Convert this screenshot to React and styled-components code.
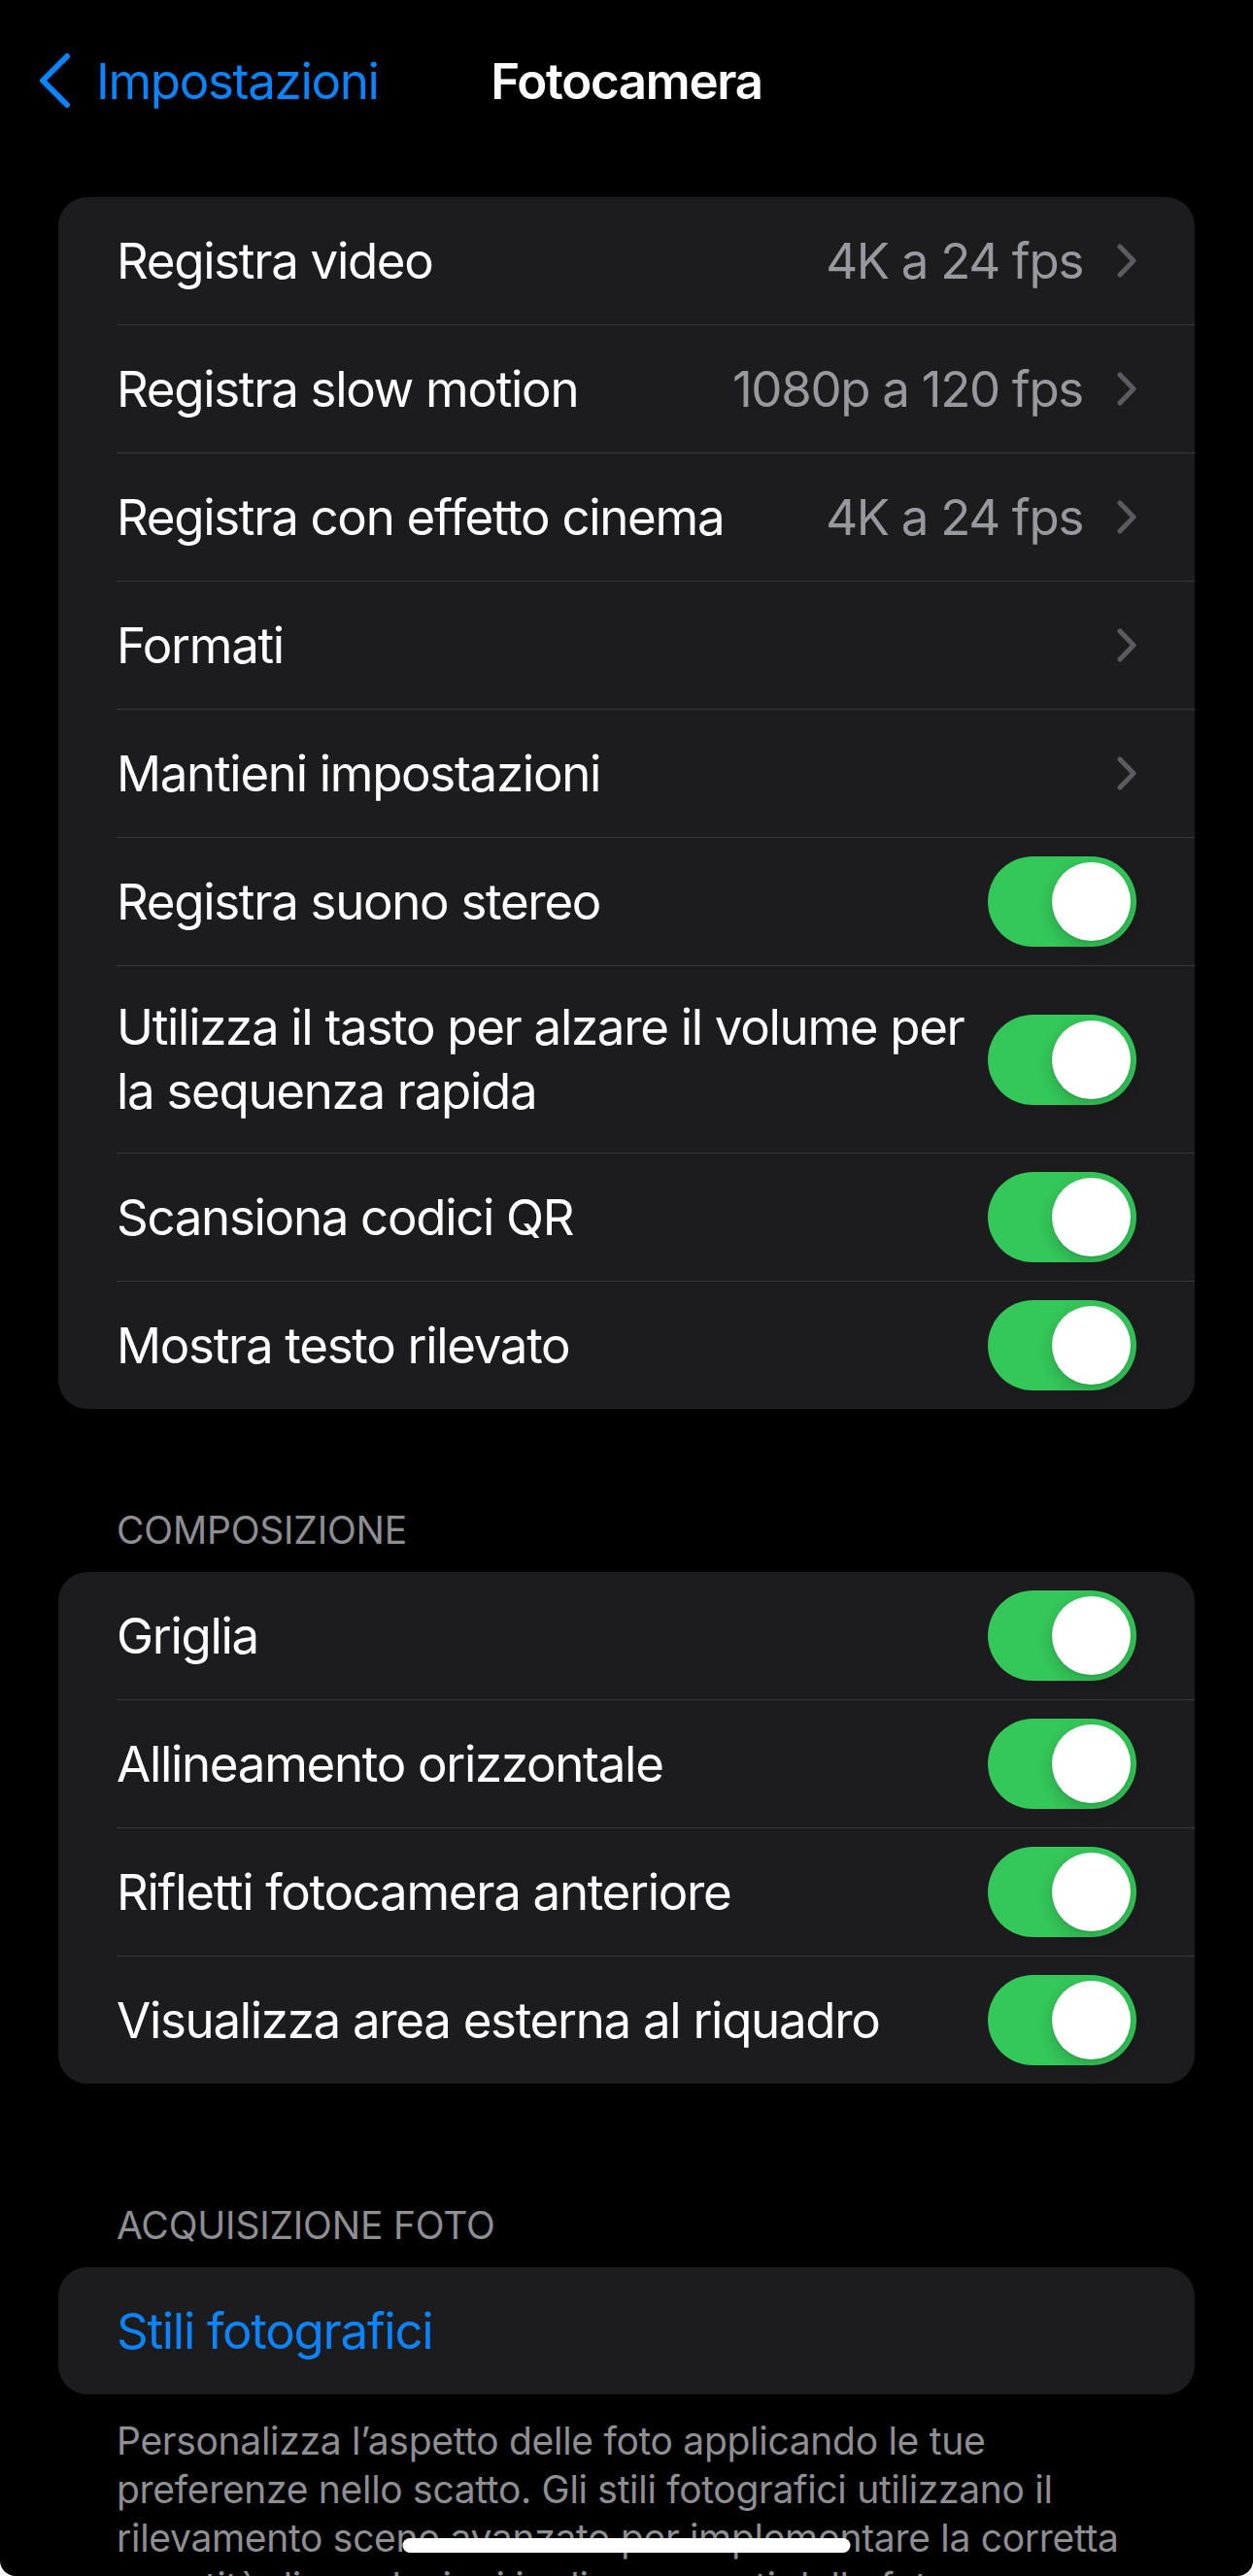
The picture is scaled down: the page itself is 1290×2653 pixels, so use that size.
import styled, { createGlobalStyle } from "styled-components";

const blue = "#0a84ff";
const green = "#34c759";
const cardColor = "#1c1c1e";
const separatorColor = "#38383a";
const secondaryText = "#98989f";

const mainRows = [
  { label: "Registra video", value: "4K a 24 fps", chevron: true },
  { label: "Registra slow motion", value: "1080p a 120 fps", chevron: true },
  { label: "Registra con effetto cinema", value: "4K a 24 fps", chevron: true },
  { label: "Formati", chevron: true },
  { label: "Mantieni impostazioni", chevron: true },
  { label: "Registra suono stereo", toggle: true },
  {
    label: "Utilizza il tasto per alzare il volume per la sequenza rapida",
    toggle: true,
  },
  { label: "Scansiona codici QR", toggle: true },
  { label: "Mostra testo rilevato", toggle: true },
];

const compositionRows = [
  { label: "Griglia", toggle: true },
  { label: "Allineamento orizzontale", toggle: true },
  { label: "Rifletti fotocamera anteriore", toggle: true },
  { label: "Visualizza area esterna al riquadro", toggle: true },
];

function Chevron() {
  return (
    <ChevronIcon width="20" height="35" viewBox="0 0 20 35">
      <path
        d="M3 3 L17 17.5 L3 32"
        fill="none"
        stroke="#5b5b60"
        strokeWidth="5"
        strokeLinecap="round"
        strokeLinejoin="round"
      />
    </ChevronIcon>
  );
}

function SettingRow({ row, first }) {
  return (
    <Row>
      <RowInner $first={first}>
        <Label $color={row.color}>{row.label}</Label>
        {row.value && <Value>{row.value}</Value>}
        {row.chevron && <Chevron />}
        {row.toggle && (
          <Switch $on>
            <Knob />
          </Switch>
        )}
      </RowInner>
    </Row>
  );
}

function Group({ rows }) {
  return (
    <Card>
      {rows.map((row, i) => (
        <SettingRow key={row.label} row={row} first={i === 0} />
      ))}
    </Card>
  );
}

export default function App() {
  return (
    <>
      <GlobalStyle />
      <Screen>
        <NavBar>
          <BackButton>
            <svg width="33" height="56" viewBox="0 0 33 56">
              <path
                d="M29 3 L4 28 L29 53"
                fill="none"
                stroke={blue}
                strokeWidth="6"
                strokeLinecap="round"
                strokeLinejoin="round"
              />
            </svg>
            <span>Impostazioni</span>
          </BackButton>
          <Title>Fotocamera</Title>
          <div />
        </NavBar>

        <Group rows={mainRows} />

        <SectionHeader $top={101}>Composizione</SectionHeader>
        <Group rows={compositionRows} />

        <SectionHeader $top={122}>Acquisizione foto</SectionHeader>
        <Group rows={[{ label: "Stili fotografici", color: blue }]} />

        <Footer>
          Personalizza l’aspetto delle foto applicando le tue preferenze nello
          scatto. Gli stili fotografici utilizzano il rilevamento scene
          avanzato per implementare la corretta quantità di regolazioni in
          diverse parti della foto.
        </Footer>

        <HomeIndicator />
      </Screen>
    </>
  );
}

const GlobalStyle = createGlobalStyle`
  body {
    margin: 0;
    background: #ffffff;
  }
`;

const Screen = styled.div`
  position: relative;
  width: 1290px;
  height: 2653px;
  overflow: hidden;
  background: #000000;
  border-radius: 0 0 16px 16px;
  padding-top: 17px;
  box-sizing: border-box;
  font-family: Inter, "Noto Sans", sans-serif;
  color: #ffffff;
`;

const NavBar = styled.div`
  height: 132px;
  display: grid;
  grid-template-columns: 1fr auto 1fr;
  align-items: center;
  margin-bottom: 54px;
`;

const BackButton = styled.div`
  display: flex;
  align-items: center;
  gap: 26px;
  padding-left: 40px;
  color: ${blue};
  font-size: 51px;
  letter-spacing: -1.3px;
  svg {
    display: block;
  }
`;

const Title = styled.div`
  font-size: 51px;
  font-weight: 600;
  letter-spacing: -1.3px;
`;

const Card = styled.div`
  margin: 0 60px;
  background: ${cardColor};
  border-radius: 30px;
  overflow: hidden;
`;

const Row = styled.div`
  padding-left: 60px;
`;

const RowInner = styled.div`
  display: flex;
  align-items: center;
  min-height: 131px;
  padding-right: 60px;
  border-top: ${(p) => (p.$first ? "none" : `1px solid ${separatorColor}`)};
`;

const Label = styled.div`
  flex: 1;
  padding: 30px 24px 30px 0;
  font-size: 51px;
  line-height: 66px;
  letter-spacing: -1.3px;
  color: ${(p) => p.$color || "#ffffff"};
`;

const Value = styled.div`
  font-size: 51px;
  line-height: 66px;
  letter-spacing: -1.3px;
  color: ${secondaryText};
  margin-right: 35px;
  white-space: nowrap;
`;

const ChevronIcon = styled.svg`
  display: block;
  flex-shrink: 0;
`;

const Switch = styled.div`
  flex-shrink: 0;
  width: 153px;
  height: 93px;
  border-radius: 47px;
  background: ${(p) => (p.$on ? green : "#39393d")};
  display: flex;
  align-items: center;
  justify-content: ${(p) => (p.$on ? "flex-end" : "flex-start")};
  padding: 0 6px;
  box-sizing: border-box;
`;

const Knob = styled.div`
  width: 81px;
  height: 81px;
  border-radius: 50%;
  background: #ffffff;
  box-shadow: 0 6px 16px rgba(0, 0, 0, 0.18), 0 1px 2px rgba(0, 0, 0, 0.1);
`;

const SectionHeader = styled.div`
  padding: ${(p) => p.$top}px 120px 19px;
  font-size: 39px;
  line-height: 48px;
  text-transform: uppercase;
  color: #8e8e93;
  letter-spacing: -0.2px;
`;

const Footer = styled.div`
  padding: 23px 120px 0;
  font-size: 39px;
  line-height: 50px;
  color: #8e8e93;
  letter-spacing: -0.3px;
`;

const HomeIndicator = styled.div`
  position: absolute;
  left: 50%;
  bottom: 24px;
  transform: translateX(-50%);
  width: 461px;
  height: 15px;
  border-radius: 8px;
  background: #ffffff;
`;
